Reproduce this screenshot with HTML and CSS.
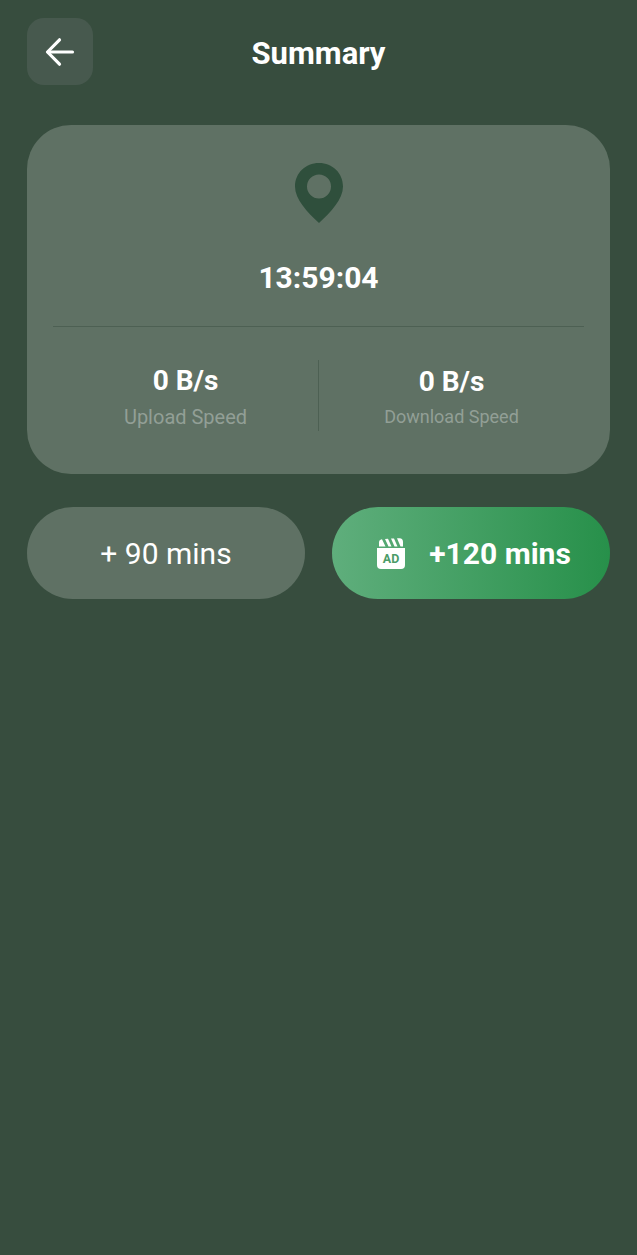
FILE: index.html
```html
<!DOCTYPE html>
<html lang="en">
<head>
  <meta charset="UTF-8" />
  <meta name="viewport" content="width=device-width, initial-scale=1.0" />
  <title>Summary</title>
  <link rel="stylesheet" href="styles.css">
</head>
<body>
  <header class="top-bar">
    <button class="back-btn" type="button" aria-label="Back">
      <svg width="30" height="30" viewBox="0 0 30 30" fill="none" stroke="#fff" stroke-width="3.2" stroke-linecap="round" stroke-linejoin="round">
        <path d="M27.500 15H3" />
        <path d="M14.500 2.800L2.500 15L14.500 27.200" />
      </svg>
    </button>
    <h1 class="title">Summary</h1>
  </header>

  <section class="summary-card">
    <svg class="pin" width="50" height="61" viewBox="0 0 50 61">
      <path fill-rule="evenodd" fill="#2f4f3c" d="M25 1C11.500 1 1 11 1 24.500C1 37 13 50 25 61C37 50 49 37 49 24.500C49 11 38.500 1 25 1ZM25 12.500A12 12 0 1 1 25 36.500A12 12 0 1 1 25 12.500Z" />
    </svg>
    <div class="time">13:59:04</div>
    <div class="stats">
      <div class="stat">
        <div class="stat-value">0 B/s</div>
        <div class="stat-label">Upload Speed</div>
      </div>
      <div class="stat">
        <div class="stat-value">0 B/s</div>
        <div class="stat-label">Download Speed</div>
      </div>
    </div>
  </section>

  <div class="actions">
    <button class="pill pill-plain" type="button">+ 90 mins</button>
    <button class="pill pill-ad" type="button">
      <svg class="ad-icon" width="28" height="31" viewBox="0 0 28 31">
        <path fill="#fff" d="M0 10H28V27A4 4 0 0 1 24 31H4A4 4 0 0 1 0 27Z" />
        <path fill="#fff" d="M2 8.500V4Q2 2 4 1.500L5 1.300L8.500 8.500ZM8 1L11 0.800L14.500 8.500H11.500ZM14 0.600L17 0.400L20.500 8.500H17.500ZM20 0.300L22.500 0.200Q26 0.500 26 4V8.500H23.500Z" />
        <text class="ad-text" x="14" y="25.300" text-anchor="middle">AD</text>
      </svg>
      <span>+120 mins</span>
    </button>
  </div>
</body>
</html>
```

FILE: styles.css
```css
* { box-sizing: border-box; }
html, body { height: 100%; }
body { margin: 0; background: #374d3e; font-family: Roboto, 'Noto Sans', sans-serif; color: #fff; padding: 18px 27px 0; }

.top-bar { display: grid; grid-template-columns: 66px 1fr 66px; align-items: center; height: 67px; }
.back-btn { width: 66px; height: 67px; border: none; border-radius: 17px; background: #47594e; padding: 0; display: flex; align-items: center; justify-content: center; }
.title { margin: 3px 0 0; font-size: 31px; font-weight: 700; text-align: center; line-height: 1; }

.summary-card { margin-top: 40px; height: 349px; background: #5f7164; border-radius: 44px; padding: 37px 26px 0; display: flex; flex-direction: column; align-items: center; }
.pin { display: block; }
.time { margin-top: 37px; font-size: 30px; font-weight: 700; line-height: 36px; }

.stats { margin-top: 30px; width: 100%; border-top: 1px solid #4d6053; padding-top: 33px; display: grid; grid-template-columns: 265px 1fr; }
.stat { height: 71px; text-align: center; }
.stat + .stat { border-left: 1px solid #4d6053; }
.stat-value { font-size: 28px; font-weight: 700; line-height: 32px; margin-top: 5px; }
.stat-label { font-size: 20px; line-height: 24px; color: #929f96; margin-top: 8px; }
.stat + .stat .stat-value { margin-top: 6px; }
.stat + .stat .stat-label { font-size: 18px; margin-top: 7px; }

.actions { margin-top: 33px; display: grid; grid-template-columns: 278px 278px; gap: 27px; }
.pill { height: 92px; border: none; border-radius: 46px; color: #fff; font-family: inherit; font-size: 30px; padding: 0; display: flex; align-items: center; justify-content: center; }
.pill-plain { background: #5f7164; }
.pill-ad { background: linear-gradient(90deg, #5fae7c, #27904a); font-weight: 700; gap: 24px; padding-left: 6px; }
.ad-icon { display: block; }
.ad-text { fill: #4c9c68; font-family: Roboto, sans-serif; font-size: 12.500px; font-weight: 700; }
```
